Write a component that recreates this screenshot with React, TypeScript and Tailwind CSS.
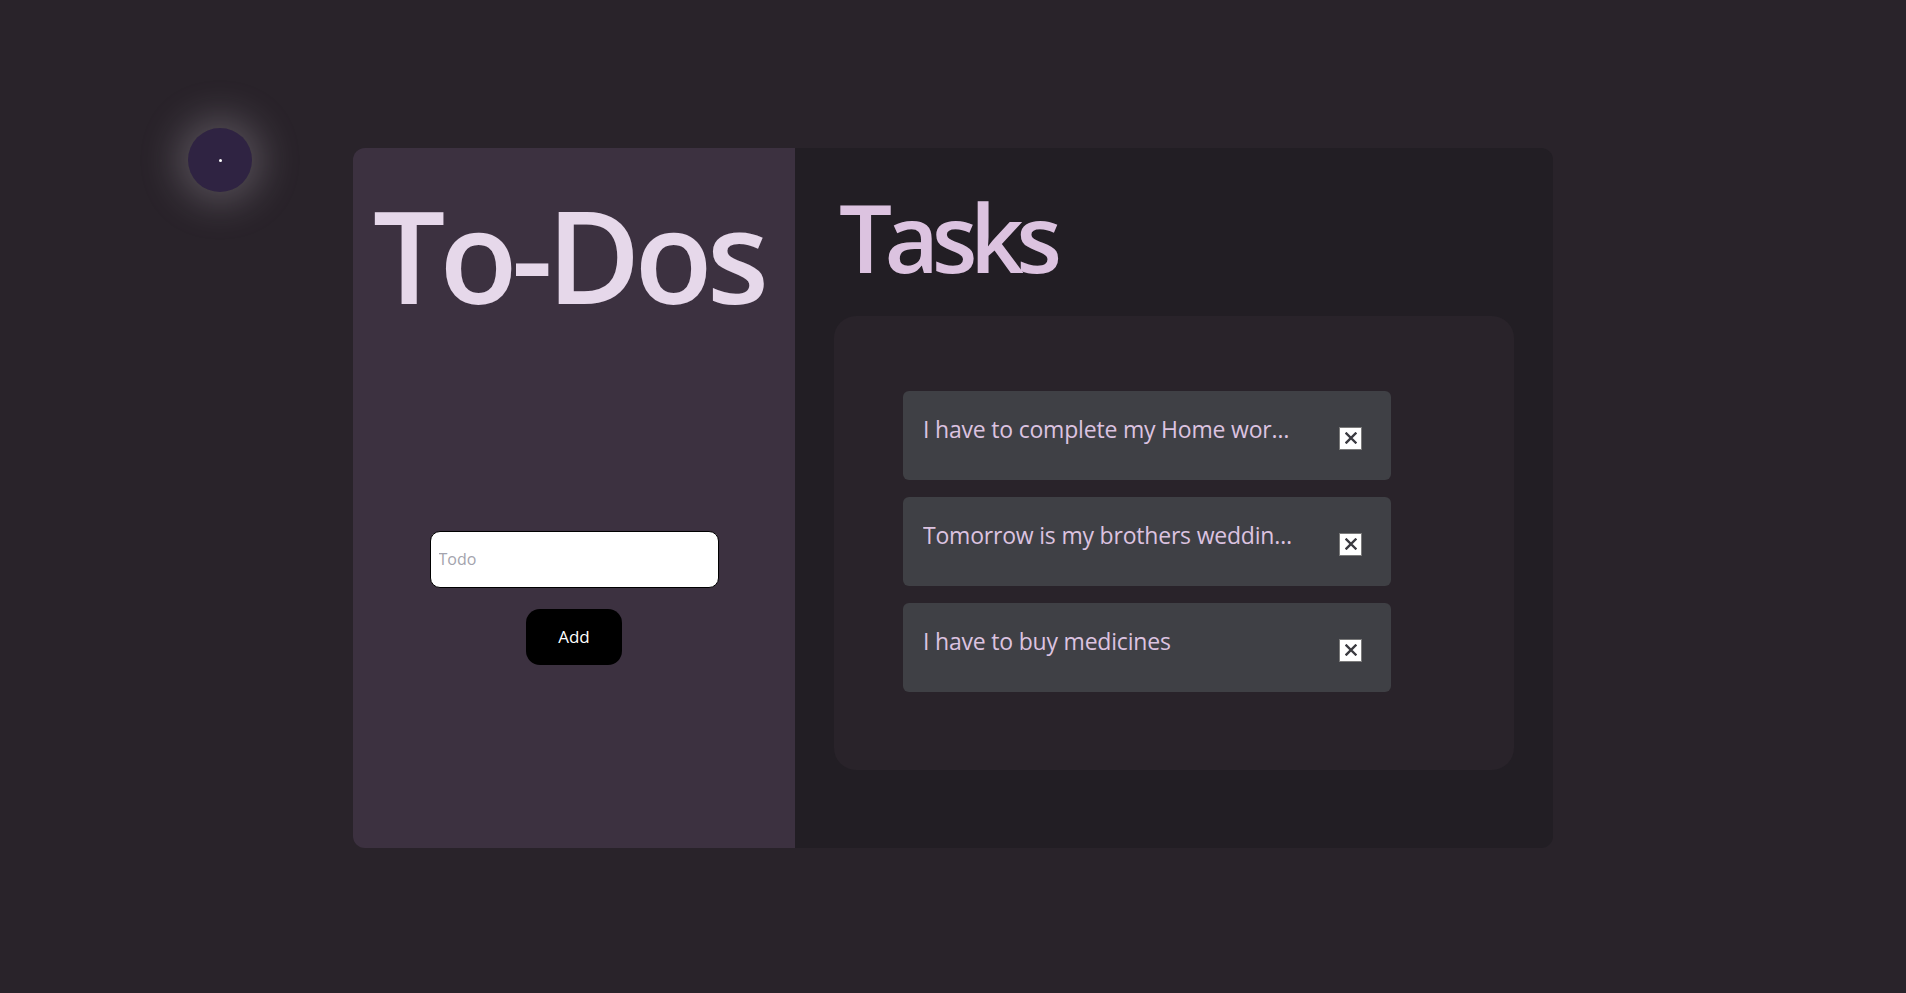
import React from "react";

const tasks = [
  "I have to complete my Home work before tomorrow",
  "Tomorrow is my brothers wedding so I have to go",
  "I have to buy medicines",
];

function XIcon() {
  return (
    <svg width="12" height="12" viewBox="0 0 12 12" fill="none">
      <path d="M1.5 1.5 L10.5 10.5 M10.5 1.5 L1.5 10.5" stroke="#3a3a40" strokeWidth="2.4" strokeLinecap="square" />
    </svg>
  );
}

export default function App() {
  return (
    <div
      className="relative min-h-screen w-full bg-[#29232a] flex items-center justify-center"
      style={{ fontFamily: '"Open Sans", "Noto Sans", sans-serif' }}
    >
      <div className="absolute left-[188px] top-[128px] w-[64px] h-[64px] rounded-full bg-[#2f2342] shadow-[0_0_36px_12px_rgba(200,195,205,0.26)] flex items-center justify-center">
        <div className="w-[3px] h-[3px] rounded-full bg-white" />
      </div>

      <div className="flex w-[1200px] h-[700px] mt-[2px] rounded-[12px] overflow-hidden">
        <div className="w-[442px] bg-[#3c3140] flex flex-col items-center pt-[43px]">
          <h1 className="pr-[12px] text-[128px] leading-[128px] font-semibold text-[#e6d8ea] tracking-[-6px] whitespace-nowrap">
            To-Dos
          </h1>
          <input
            placeholder="Todo"
            className="mt-[212px] w-[289px] h-[57px] rounded-[10px] border border-black bg-white pl-[8px] text-[16px] text-black placeholder:text-[#a3a3ad] outline-none"
          />
          <button className="mt-[21px] w-[96px] h-[56px] rounded-[14px] bg-black text-white text-[17px]">
            Add
          </button>
        </div>

        <div className="flex-1 bg-[#221e24] flex flex-col px-[39px] pt-[42px]">
          <h2 className="pl-[5px] text-[94px] leading-[94px] font-semibold text-[#dcc3e0] tracking-[-7.5px]">
            Tasks
          </h2>
          <div className="mt-[32px] h-[454px] rounded-[22px] bg-[#29232a] pl-[69px] pt-[75px] flex flex-col gap-[17px]">
            {tasks.map((t) => (
              <div
                key={t}
                className="w-[488px] h-[89px] shrink-0 rounded-[6px] bg-[#3f4045] flex items-center justify-between pl-[20px] pr-[29px]"
              >
                <span className="block max-w-[372px] truncate text-[23px] leading-[32px] text-[#dcc3e0] mb-[12px] tracking-[-0.2px]">
                  {t}
                </span>
                <button className="mt-[6px] w-[23px] h-[23px] bg-white border border-[#7a7a7a] flex items-center justify-center">
                  <XIcon />
                </button>
              </div>
            ))}
          </div>
        </div>
      </div>
    </div>
  );
}
